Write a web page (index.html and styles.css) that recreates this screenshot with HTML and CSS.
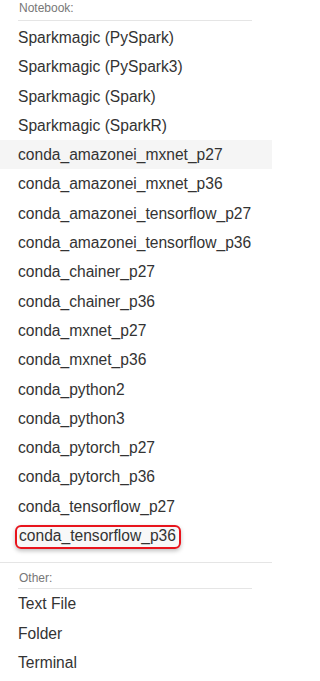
FILE: index.html
```html
<!DOCTYPE html>
<html>
<head>
<meta charset="utf-8">
<link rel="stylesheet" href="styles.css">
</head>
<body>
<div class="menu">
  <div class="section-head section-head--first">Notebook:</div>
  <ul class="items">
    <li class="item">Sparkmagic (PySpark)</li>
    <li class="item">Sparkmagic (PySpark3)</li>
    <li class="item">Sparkmagic (Spark)</li>
    <li class="item">Sparkmagic (SparkR)</li>
    <li class="item item--hover">conda_amazonei_mxnet_p27</li>
    <li class="item">conda_amazonei_mxnet_p36</li>
    <li class="item">conda_amazonei_tensorflow_p27</li>
    <li class="item">conda_amazonei_tensorflow_p36</li>
    <li class="item">conda_chainer_p27</li>
    <li class="item">conda_chainer_p36</li>
    <li class="item">conda_mxnet_p27</li>
    <li class="item">conda_mxnet_p36</li>
    <li class="item">conda_python2</li>
    <li class="item">conda_python3</li>
    <li class="item">conda_pytorch_p27</li>
    <li class="item">conda_pytorch_p36</li>
    <li class="item">conda_tensorflow_p27</li>
    <li class="item"><span class="marked">conda_tensorflow_p36</span></li>
  </ul>
  <div class="divider"></div>
  <div class="section-head section-head--other">Other:</div>
  <ul class="items items--other">
    <li class="item">Text File</li>
    <li class="item">Folder</li>
    <li class="item">Terminal</li>
  </ul>
</div>
</body>
</html>
```
FILE: styles.css
```css
html, body {
  margin: 0;
  padding: 0;
  background: #ffffff;
}

body {
  font-family: "Liberation Sans", Arial, sans-serif;
  color: #333333;
  width: 272px;
  overflow: hidden;
}

.menu {
  display: flex;
  flex-direction: column;
}

.section-head {
  font-size: 12px;
  line-height: 16px;
  color: #777777;
  margin: 0 20px 0 18px;
  padding: 0 0 4px 1px;
  border-bottom: 1px solid #e5e5e5;
}

.section-head--first {
  margin-bottom: 2px;
}

.section-head--other {
  margin-top: 7px;
  padding-bottom: 2px;
}

.items {
  list-style: none;
  margin: 0;
  padding: 0;
}

.item {
  font-size: 15.6px;
  line-height: 21.3px;
  padding: 4px 18px;
  white-space: nowrap;
}

.item--hover {
  background: #f5f5f5;
}

.marked {
  margin-left: -3px;
  padding: 0 3px 3px 2px;
  border: 2px solid #e8141c;
  border-radius: 6px;
  background: #f8f8f8;
  box-shadow: 0 2px 4px rgba(0, 0, 0, 0.25);
}

.divider {
  height: 1px;
  background: #e5e5e5;
  margin-top: 12px;
}
```
